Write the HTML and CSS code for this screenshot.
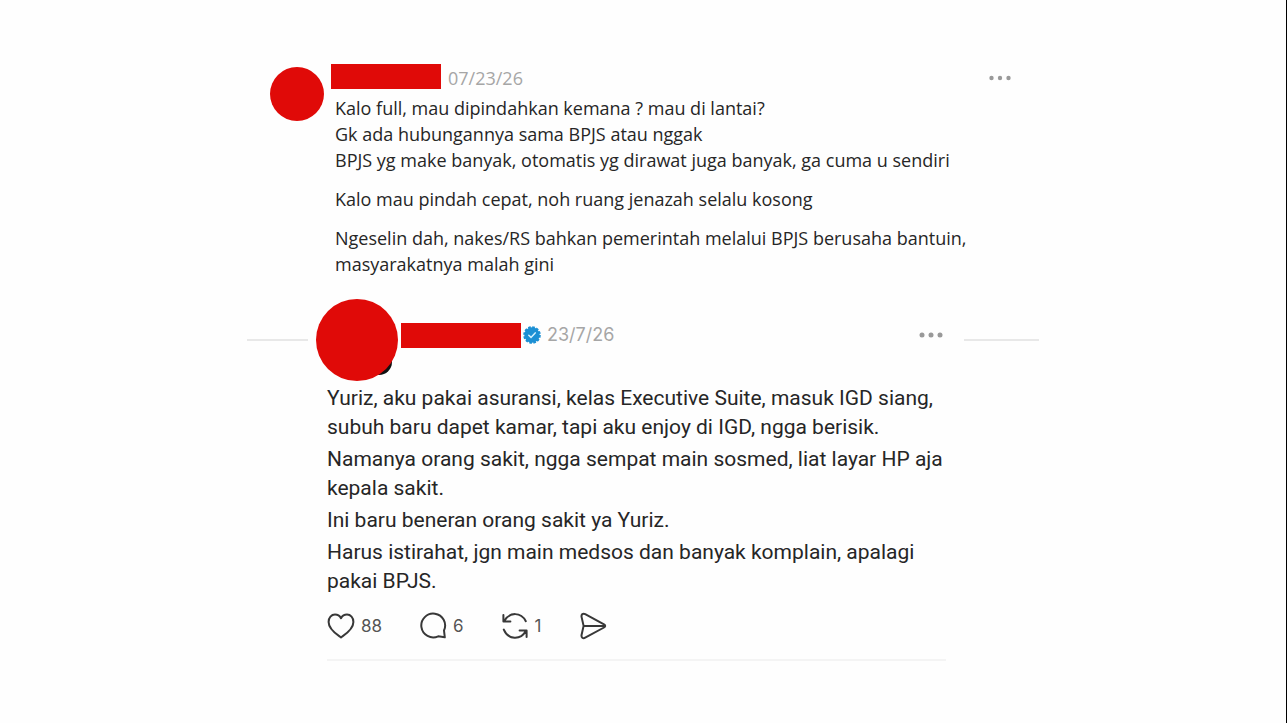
FILE: index.html
```html
<!DOCTYPE html>
<html lang="id">
<head>
<meta charset="utf-8">
<meta name="viewport" content="width=device-width, initial-scale=1">
<title>Thread</title>
<link rel="stylesheet" href="styles.css">
</head>
<body>
<main class="thread">
  <article class="post">
    <div class="avatar"></div>
    <div class="post-main">
      <header class="post-head">
        <span class="name"></span>
        <time class="date" datetime="2026-07-23">07/23/26</time>
        <button class="more" type="button" aria-label="More">
          <svg width="22" height="6" viewBox="0 0 22 6"><circle cx="2.5" cy="3" r="2.2"/><circle cx="11" cy="3" r="2.2"/><circle cx="19.5" cy="3" r="2.2"/></svg>
        </button>
      </header>
      <div class="post-text">
        <p>Kalo full, mau dipindahkan kemana ? mau di lantai?<br>Gk ada hubungannya sama BPJS atau nggak<br>BPJS yg make banyak, otomatis yg dirawat juga banyak, ga cuma u sendiri</p>
        <p>Kalo mau pindah cepat, noh ruang jenazah selalu kosong</p>
        <p>Ngeselin dah, nakes/RS bahkan pemerintah melalui BPJS berusaha bantuin,<br>masyarakatnya malah gini</p>
      </div>
    </div>
  </article>

  <article class="reply">
    <header class="reply-head">
      <span class="rule rule-left"></span>
      <div class="avatar avatar-large"></div>
      <div class="reply-meta">
        <span class="name name-large"></span>
        <svg class="verified" width="18" height="18" viewBox="0 0 18 18"><circle cx="9" cy="9" r="7.7" fill="#1c90d4"/><circle cx="9" cy="9" r="7.8" fill="none" stroke="#1c90d4" stroke-width="2" stroke-dasharray="2.6 1.484"/><path d="M5.8 9.3l2.2 2.1 4.2-4.5" fill="none" stroke="#d5f2ff" stroke-width="1.5" stroke-linecap="round"/></svg>
        <time class="date" datetime="2026-07-23">23/7/26</time>
        <button class="more" type="button" aria-label="More">
          <svg width="24" height="6" viewBox="0 0 24 6"><circle cx="3" cy="3" r="2.5"/><circle cx="12" cy="3" r="2.5"/><circle cx="21" cy="3" r="2.5"/></svg>
        </button>
      </div>
      <span class="rule rule-right"></span>
    </header>
    <div class="reply-body">
      <div class="reply-text">
        <p>Yuriz, aku pakai asuransi, kelas Executive Suite, masuk IGD siang,<br>subuh baru dapet kamar, tapi aku enjoy di IGD, ngga berisik.</p>
        <p>Namanya orang sakit, ngga sempat main sosmed, liat layar HP aja<br>kepala sakit.</p>
        <p>Ini baru beneran orang sakit ya Yuriz.</p>
        <p>Harus istirahat, jgn main medsos dan banyak komplain, apalagi<br>pakai BPJS.</p>
      </div>
      <footer class="actions">
        <button class="action action-like" type="button" aria-label="Like">
          <svg width="28" height="28" viewBox="0 0 28 28"><path d="M14 25.4C10.5 22.8 1.6 17.6 1.6 9.9C1.6 5.6 4.4 2.6 8 2.6C10.8 2.6 12.9 4.2 14 6.2C15.1 4.2 17.2 2.6 20 2.6C23.6 2.6 26.4 5.6 26.4 9.9C26.4 17.6 17.5 22.8 14 25.4Z"/></svg>
          <span>88</span>
        </button>
        <button class="action action-comment" type="button" aria-label="Comment">
          <svg width="28" height="28" viewBox="0 0 28 28"><path d="M25 18.5A11.9 11.9 0 1 0 19.2 24.3L25.8 25.3Z"/></svg>
          <span>6</span>
        </button>
        <button class="action action-repost" type="button" aria-label="Repost">
          <svg width="28" height="28" viewBox="0 0 28 28"><path d="M2.4 3v6.6h7M3.2 9C8.5-.2 20-.2 24.8 9.2M25.6 25v-6.6h-7M24.8 19C19.6 28.4 7.2 28 2.8 17.6"/></svg>
          <span>1</span>
        </button>
        <button class="action" type="button" aria-label="Share">
          <svg width="28" height="28" viewBox="0 0 28 28"><path d="M4.6 13.9L2.6 5.1C2 2.4 4 .9 6.2 2.1L25 12.3C26.6 13.2 26.6 14.6 25 15.5L6.2 25.7C4 26.9 2 25.4 2.6 22.7ZM4.6 13.9H25.5"/></svg>
        </button>
      </footer>
    </div>
  </article>
</main>
</body>
</html>
```
FILE: styles.css
```css
* {
  box-sizing: border-box;
}

body {
  margin: 0;
  min-height: 100vh;
  padding: 64px 16px 0;
  background: #fefefe;
  border-right: 1px solid #000;
  font-family: Roboto, "Liberation Sans", sans-serif;
  color: #262626;
}

p {
  margin: 0;
}

button {
  display: flex;
  align-items: center;
  padding: 0;
  border: 0;
  background: none;
  color: inherit;
  font: inherit;
  cursor: pointer;
}

.thread {
  max-width: 792px;
  margin: 0 auto;
}

.avatar {
  flex: none;
  width: 54px;
  height: 54px;
  border-radius: 50%;
  background: #e00a08;
}

.name {
  width: 110px;
  height: 25px;
  background: #e00a08;
}

.date {
  color: #a6a6a6;
}

.more {
  margin-left: auto;
  fill: #999;
}

.post {
  display: flex;
  gap: 7px;
  padding: 0 28px 0 23px;
  font-family: "Open Sans", "Noto Sans", sans-serif;
  font-size: 18px;
  line-height: 26px;
}

.post .avatar {
  margin-top: 3px;
}

.post-main {
  flex: 1;
}

.post-head {
  display: flex;
  align-items: center;
  gap: 7px;
  height: 28px;
}

.post-head .name {
  align-self: flex-start;
}

.post-text {
  display: grid;
  gap: 13px;
  padding: 3px 0 0 4px;
}

.reply {
  margin-top: 22px;
}

.reply-head {
  display: flex;
  align-items: center;
}

.rule {
  height: 2px;
  background: #e8e8e8;
}

.rule-left {
  width: 61px;
  margin-right: 8px;
}

.rule-right {
  width: 75px;
  margin-left: 21px;
}

.avatar-large {
  position: relative;
  width: 82px;
  height: 82px;
  background: none;
}

.avatar-large::before {
  content: "";
  position: absolute;
  right: 6px;
  bottom: 6px;
  width: 26px;
  height: 26px;
  border-radius: 50%;
  background: #111;
}

.avatar-large::after {
  content: "";
  position: absolute;
  inset: 0;
  border-radius: 50%;
  background: #e00a08;
}

.reply-meta {
  display: flex;
  flex: 1;
  align-items: center;
  margin: 0 0 10px 3px;
  font-family: Inter, "Liberation Sans", sans-serif;
  font-size: 18px;
  line-height: 26px;
}

.name-large {
  width: 120px;
}

.verified {
  margin: 0 6px 0 2px;
}

.reply-body {
  padding: 3px 93px 0 80px;
}

.reply-text {
  display: grid;
  gap: 3px;
  font-size: 21px;
  line-height: 29px;
}

.actions {
  display: flex;
  align-items: center;
  margin-top: 16px;
  padding-bottom: 19px;
  border-bottom: 2px solid #f4f4f4;
  color: #555;
  font-family: Inter, "Liberation Sans", sans-serif;
  font-size: 17px;
}

.action {
  gap: 6px;
}

.action svg {
  fill: none;
  stroke: #383838;
  stroke-width: 2;
  stroke-linecap: round;
  stroke-linejoin: round;
}

.action-like,
.action-comment,
.action-repost {
  margin-right: 37px;
}
```
